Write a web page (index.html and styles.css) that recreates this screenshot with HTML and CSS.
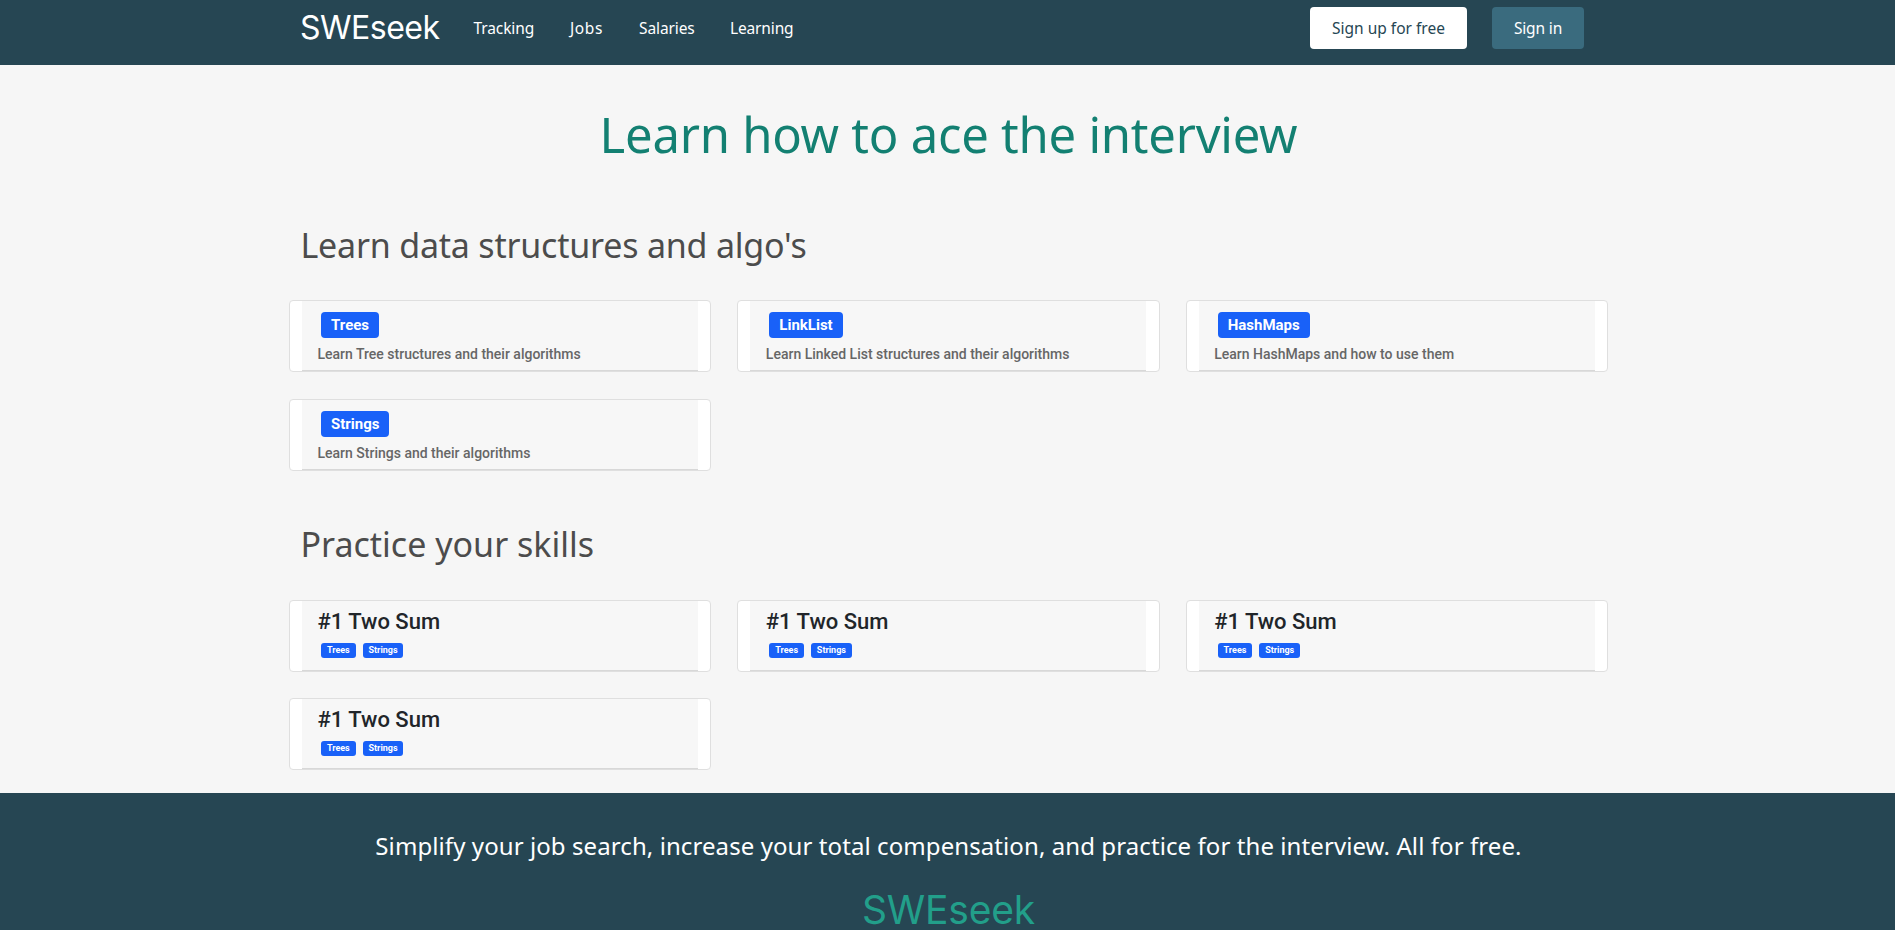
FILE: index.html
```html
<!DOCTYPE html>
<html lang="en">
<head>
<meta charset="utf-8">
<title>SWEseek</title>
<link rel="stylesheet" href="styles.css">
</head>
<body>
<header class="navbar">
  <a class="brand">SWEseek</a>
  <nav class="links"><a class="tracking">Tracking</a><a class="jobs">Jobs</a><a class="salaries">Salaries</a><a>Learning</a></nav>
  <div class="actions"><a class="btn btn-light">Sign up for free</a><a class="btn btn-teal">Sign in</a></div>
</header>
<main class="content">
  <h1 class="title">Learn how to ace the interview</h1>
  <section>
    <h2 class="heading">Learn data structures and algo's</h2>
    <div class="grid topics">
      <article class="card"><div class="body"><span class="badge">Trees</span><p class="desc">Learn Tree structures and their algorithms</p></div></article>
      <article class="card"><div class="body"><span class="badge">LinkList</span><p class="desc">Learn Linked List structures and their algorithms</p></div></article>
      <article class="card"><div class="body"><span class="badge">HashMaps</span><p class="desc">Learn HashMaps and how to use them</p></div></article>
      <article class="card"><div class="body"><span class="badge">Strings</span><p class="desc">Learn Strings and their algorithms</p></div></article>
    </div>
  </section>
  <section>
    <h2 class="heading second">Practice your skills</h2>
    <div class="grid problems">
      <article class="card"><div class="body"><h3 class="problem">#1 Two Sum</h3><div class="tags"><span class="tag">Trees</span><span class="tag">Strings</span></div></div></article>
      <article class="card"><div class="body"><h3 class="problem">#1 Two Sum</h3><div class="tags"><span class="tag">Trees</span><span class="tag">Strings</span></div></div></article>
      <article class="card"><div class="body"><h3 class="problem">#1 Two Sum</h3><div class="tags"><span class="tag">Trees</span><span class="tag">Strings</span></div></div></article>
      <article class="card"><div class="body"><h3 class="problem">#1 Two Sum</h3><div class="tags"><span class="tag">Trees</span><span class="tag">Strings</span></div></div></article>
    </div>
  </section>
</main>
<footer class="footer">
  <p class="pitch">Simplify your job search, increase your total compensation, and practice for the interview. All for free.</p>
  <div class="footer-brand">SWEseek</div>
</footer>
</body>
</html>
```
FILE: styles.css
```css
* { box-sizing: border-box; }
body { margin: 0; height: 930px; overflow: hidden; display: flex; flex-direction: column; background: #f6f6f6; font-family: "Noto Sans", "Open Sans", sans-serif; color: #212529; }
h1, h2, h3, p { margin: 0; font-weight: 400; }

.navbar { flex: none; height: 65px; padding: 0 311px 9px 300px; display: flex; align-items: center; background: #264653; color: #fff; }
.brand { width: 173.5px; font: 400 32px/40px Inter, sans-serif; letter-spacing: -0.5px; }
.links { display: flex; font-size: 15.5px; line-height: 24px; }
.links a { letter-spacing: -0.1px; }
.links .tracking { width: 96.5px; }
.links .jobs { width: 69px; letter-spacing: 0.6px; }
.links .salaries { width: 91px; }
.links a:last-child { letter-spacing: -0.15px; }
.actions { margin-left: auto; display: flex; gap: 25px; }
.btn { height: 42px; border-radius: 4px; font-size: 15.5px; line-height: 42px; text-align: center; }
.btn-light { width: 157px; background: #fff; color: #264653; }
.btn-teal { width: 92px; background: #3a6b7e; letter-spacing: -0.15px; }

.content { flex: none; height: 728px; padding: 0 287px 0 289px; }
.title { padding-top: 36px; font-size: 49px; line-height: 66px; letter-spacing: -0.25px; text-align: center; color: #138072; }
.heading { padding-left: 11.5px; margin-top: 55px; font-size: 34px; line-height: 46px; letter-spacing: -0.21px; color: #4c4c4c; }
.heading.second { margin-top: 50px; letter-spacing: 0; }

.grid { display: grid; grid-template-columns: repeat(3, 1fr); column-gap: 26px; }
.topics { row-gap: 27px; margin-top: 32px; }
.problems { row-gap: 26px; margin-top: 33px; }
.card { height: 72px; padding: 0 12.5px 0 12px; border: 1px solid #dfdfdf; border-radius: 4px; background: #fff; }
.body { height: 100%; padding-left: 15.5px; background: #f7f7f7; border-bottom: 1px solid #d8d8d8; font-family: Roboto, sans-serif; }
.topics .body { padding-top: 11px; }
.badge { display: block; width: max-content; height: 26px; margin-left: 3.5px; padding: 0 10px; border-radius: 4px; background: #1961f8; color: #fff; font-size: 15px; font-weight: 700; line-height: 26px; }
.desc { margin-top: 6px; font-size: 14px; font-weight: 500; line-height: 21px; color: #666; }
.problem { padding-top: 7px; font-size: 22px; font-weight: 500; line-height: 28px; color: #212529; }
.tags { display: flex; gap: 7px; margin: 7px 0 0 3.5px; }
.tag { height: 15px; padding: 0 5.9px; border-radius: 3px; background: #1961f8; color: #fff; font-size: 9px; font-weight: 700; line-height: 14px; }

.footer { flex: 1; background: #264653; text-align: center; }
.pitch { padding: 35px 0 0 2px; font-size: 24px; line-height: 36px; letter-spacing: 0.085px; color: #fff; }
.footer-brand { margin-top: 21px; padding-left: 2px; font: 400 39px/50px Inter, sans-serif; letter-spacing: -0.2px; color: #229f8a; }
```
